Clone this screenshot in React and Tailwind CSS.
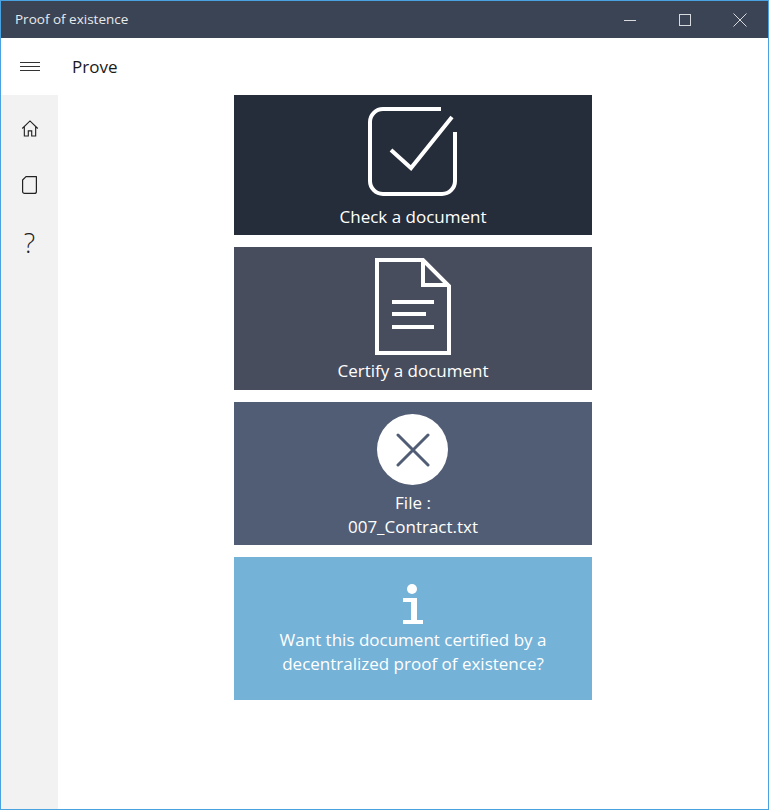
import React from "react";

const font = "font-['Open_Sans','Noto_Sans',sans-serif]";

const Card = ({ color, height, children }) => (
  <div className={`${color} ${height} w-[358px] flex flex-col items-center text-white`}>
    {children}
  </div>
);

const App = () => {
  return (
    <div className={`${font} w-[769px] h-[810px] border border-[#4aa3e0] flex flex-col bg-white overflow-hidden`}>
      {/* title bar */}
      <div className="h-[37px] shrink-0 bg-[#3a4454] flex items-center justify-between">
        <span className="pl-[14px] text-[13.5px] text-[#e8eaec]">Proof of existence</span>
        <div className="flex items-center text-[#d8dade]">
          <svg width="12" height="12" viewBox="0 0 12 12" className="mr-[43px]">
            <path d="M0 6.5h12" stroke="currentColor" strokeWidth="1" />
          </svg>
          <svg width="12" height="12" viewBox="0 0 12 12" className="mr-[42px]">
            <rect x="0.5" y="0.5" width="11" height="11" fill="none" stroke="currentColor" strokeWidth="1" />
          </svg>
          <svg width="14" height="14" viewBox="0 0 14 14" className="mr-[21px]">
            <path d="M0.5 0.5l13 13M13.5 0.5l-13 13" stroke="currentColor" strokeWidth="1" />
          </svg>
        </div>
      </div>

      {/* header */}
      <div className="h-[57px] shrink-0 flex items-center">
        <div className="w-[57px] flex justify-center">
          <svg width="20" height="11" viewBox="0 0 20 11">
            <path d="M0 1.5h20M0 5.5h20M0 9.5h20" stroke="#333" strokeWidth="1" />
          </svg>
        </div>
        <span className="ml-[14px] mt-[1px] text-[17px] text-[#1a1a1a]">Prove</span>
      </div>

      <div className="flex-1 flex min-h-0">
        {/* sidebar */}
        <div className="w-[57px] shrink-0 bg-[#f2f2f2] flex flex-col items-center pt-[25px] text-[#222]">
          <svg width="18" height="17" viewBox="0 0 18 18" fill="none" stroke="currentColor" strokeWidth="1.2">
            <path d="M0.8 9L9 1l8.2 8M3 7v10h4.2v-5.5h3.6V17H15V7" />
          </svg>
          <svg width="15" height="18" viewBox="0 0 15 18" fill="none" stroke="currentColor" strokeWidth="1.2" className="mt-[39px]">
            <path d="M4 0.6H14.4V15.4a2 2 0 0 1-2 2H2.6a2 2 0 0 1-2-2V4z" strokeLinejoin="round" />
          </svg>
          <span className="mt-[35px] text-[27px] leading-[28px] font-light">?</span>
        </div>

        {/* cards */}
        <div className="flex-1 flex flex-col items-center gap-3">
          <Card color="bg-[#252c3a]" height="h-[140px]">
            <svg width="90" height="90" viewBox="0 0 90 90" fill="none" stroke="white" strokeWidth="4" className="mt-[12px]">
              <path d="M73 2H15A13 13 0 0 0 2 15V74A13 13 0 0 0 15 87H74A13 13 0 0 0 87 74V25" />
              <path d="M23 43L43 61L84 10" />
            </svg>
            <span className="mt-[8px] text-[17px] leading-6">Check a document</span>
          </Card>

          <Card color="bg-[#484d5e]" height="h-[143px]">
            <svg width="76" height="97" viewBox="0 0 76 97" fill="none" stroke="white" strokeWidth="4" className="mt-[11px]">
              <path d="M2 2H48L74 28V95H2Z" />
              <path d="M48 2V27H74" />
              <path d="M17 44H59M17 56H51M17 69H59" />
            </svg>
            <span className="mt-[4px] text-[17px] leading-6">Certify a document</span>
          </Card>

          <Card color="bg-[#515d74]" height="h-[143px]">
            <div className="mt-[12px] mr-[1px] w-[71px] h-[71px] rounded-full bg-white flex items-center justify-center">
              <svg width="34" height="34" viewBox="0 0 34 34" fill="none" stroke="#515d74" strokeWidth="3" strokeLinecap="round">
                <path d="M2 2L32 32M32 2L2 32" />
              </svg>
            </div>
            <span className="mt-[6px] text-[17px] leading-6">File :</span>
            <span className="text-[17px] leading-6">007_Contract.txt</span>
          </Card>

          <Card color="bg-[#75b2d7]" height="h-[143px]">
            <svg width="20" height="40" viewBox="0 0 20 40" fill="white" className="mt-[27px]">
              <circle cx="9" cy="5" r="5" />
              <path d="M0 14H14V36H20V40H0V36H8V18H0Z" />
            </svg>
            <span className="mt-[4px] text-[17px] leading-6 text-center">
              Want this document certified by a
              <br />
              decentralized proof of existence?
            </span>
          </Card>
        </div>
      </div>
    </div>
  );
};

export default App;
